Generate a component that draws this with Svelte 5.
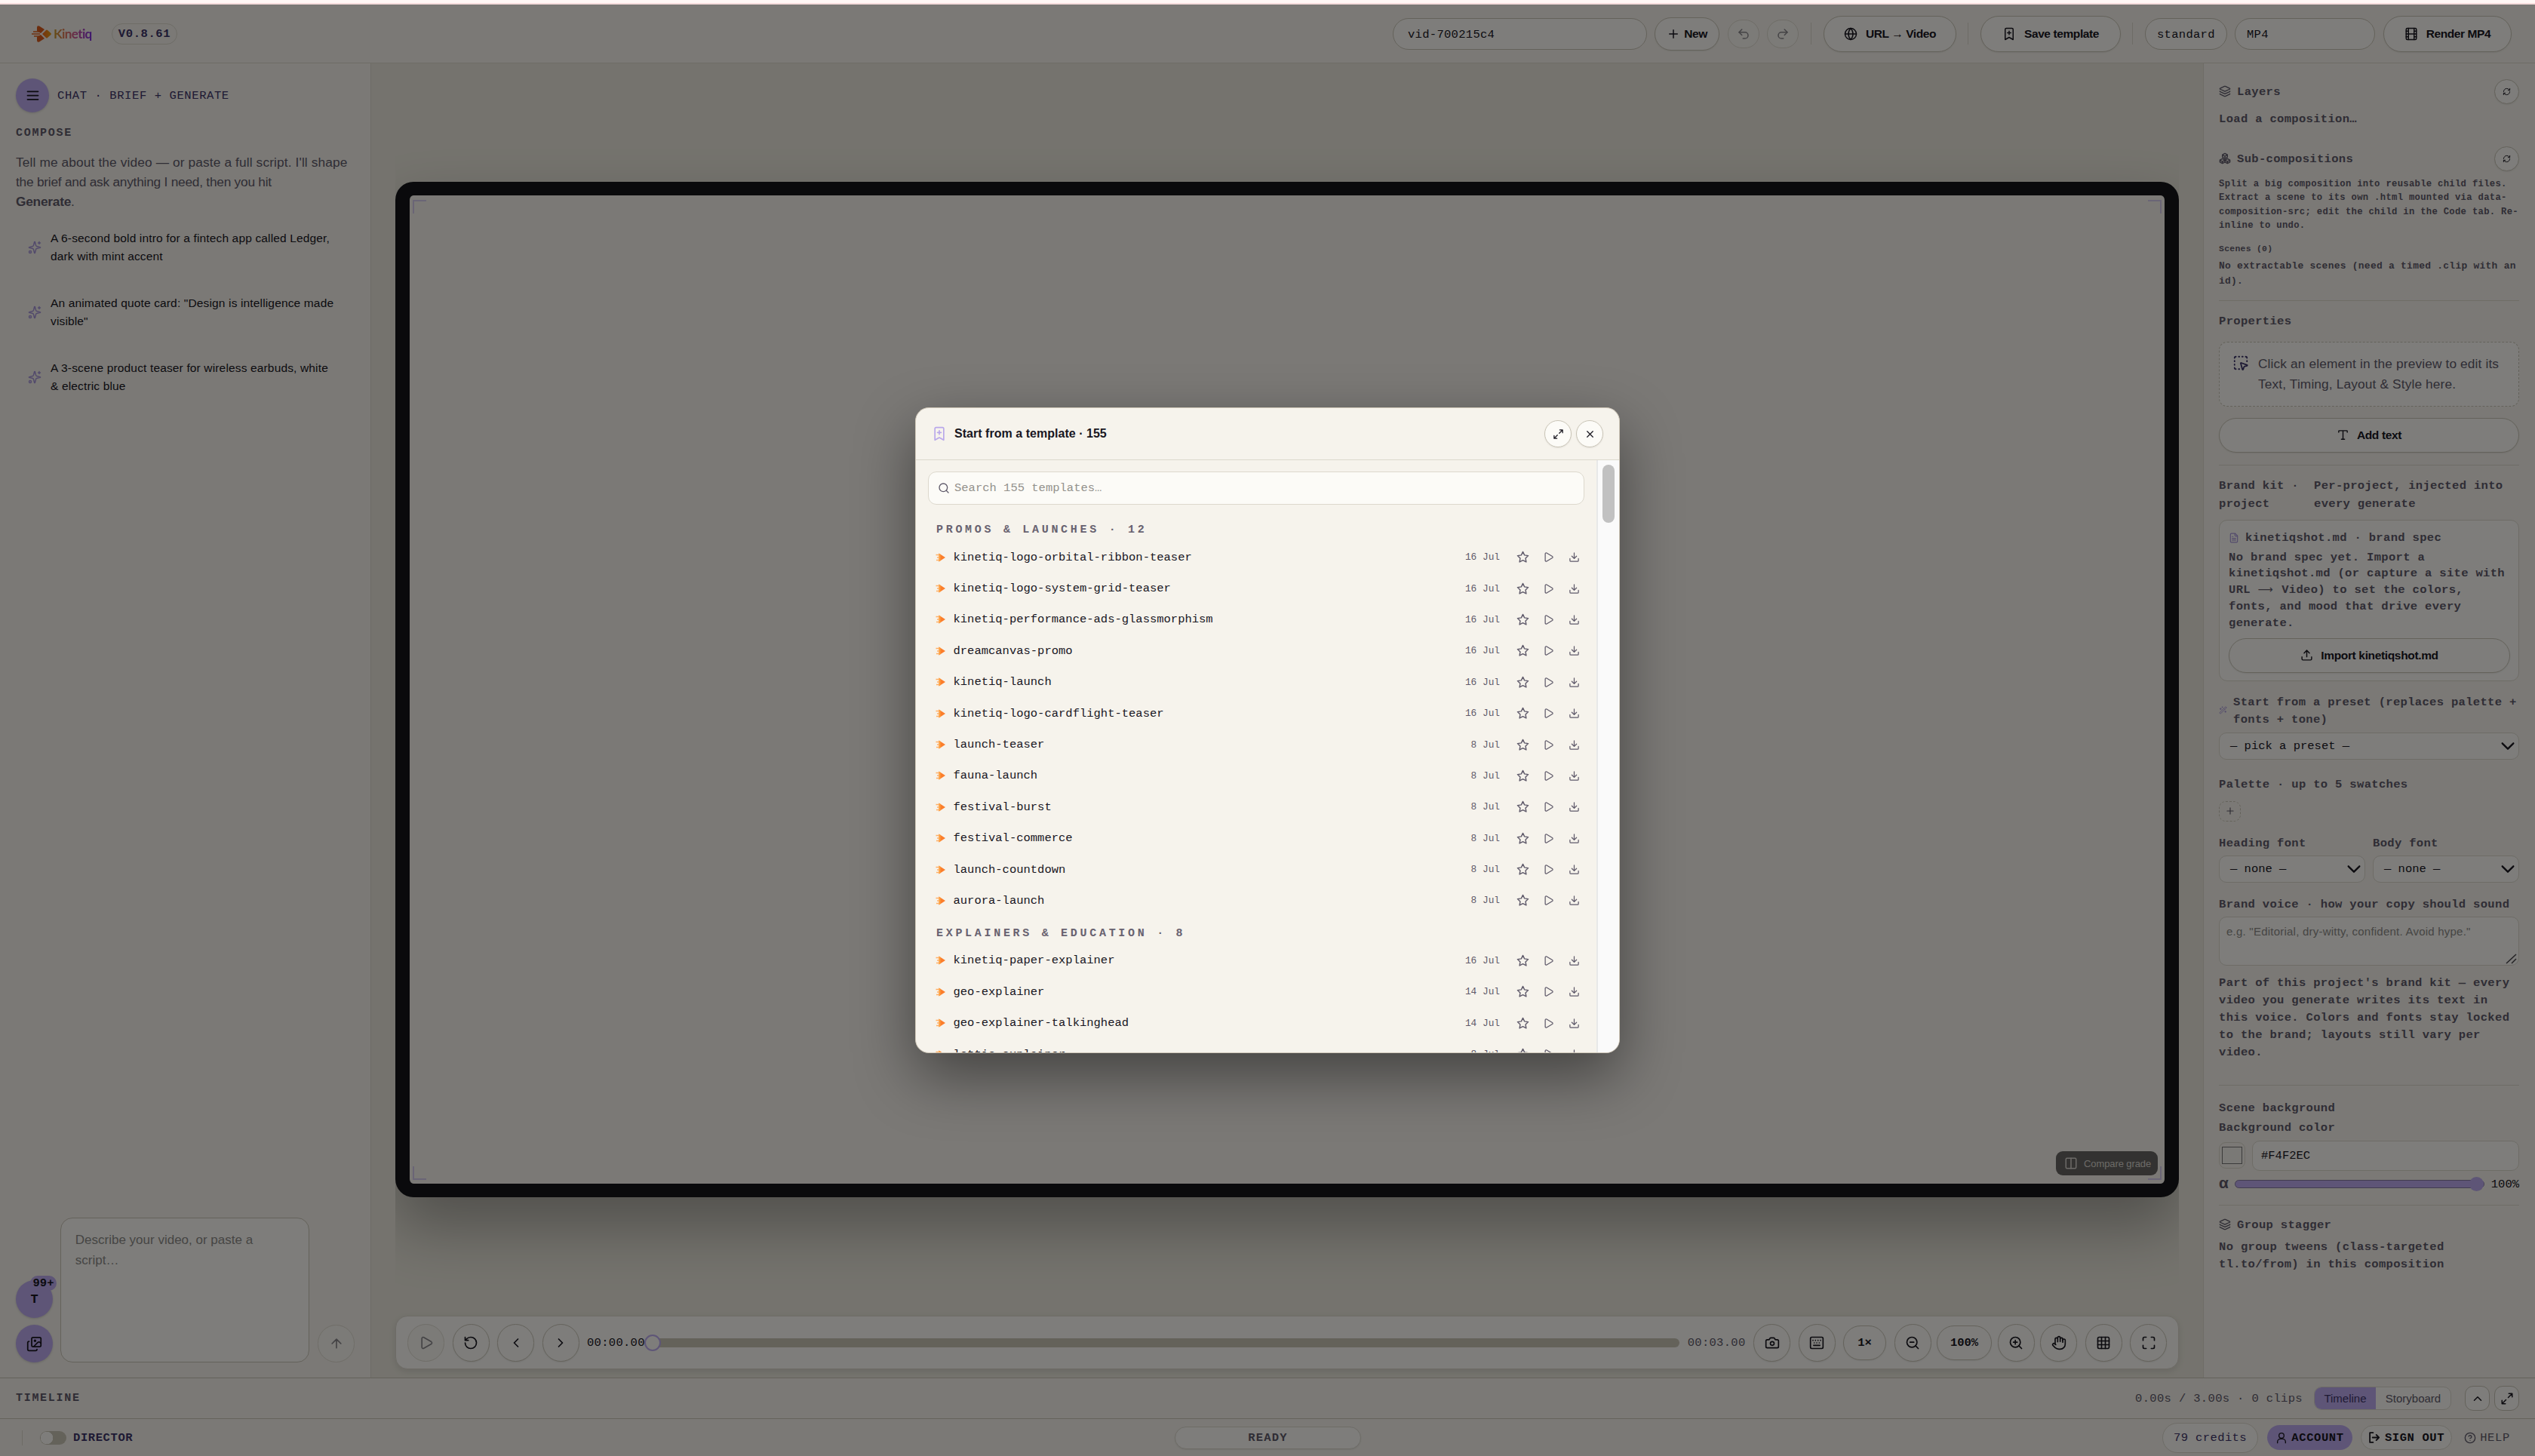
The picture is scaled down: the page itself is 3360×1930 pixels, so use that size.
<script lang="ts">
  const icons: Record<string, string> = {
    menu: '<path d="M4 6h16M4 12h16M4 18h16"/>',
    sparkles: '<path d="M9.9 15.5A2 2 0 0 0 8.500 14.100l-6.100-1.600a.5.5 0 0 1 0-1L8.500 9.900A2 2 0 0 0 9.900 8.500l1.600-6.100a.5.5 0 0 1 1 0L14.100 8.500A2 2 0 0 0 15.500 9.900l6.100 1.600a.5.5 0 0 1 0 1L15.500 14.100a2 2 0 0 0-1.400 1.400l-1.600 6.100a.5.5 0 0 1-1 0z"/><path d="M20 2v4M22 4h-4"/><circle cx="4" cy="20" r="2"/>',
    plus: '<path d="M5 12h14M12 5v14"/>',
    undo: '<path d="M9 14 4 9l5-5"/><path d="M4 9h10.500a5.500 5.500 0 0 1 0 11H11"/>',
    redo: '<path d="m15 14 5-5-5-5"/><path d="M20 9H9.500a5.500 5.500 0 0 0 0 11H13"/>',
    globe: '<circle cx="12" cy="12" r="10"/><path d="M12 2a14.500 14.500 0 0 0 0 20 14.500 14.500 0 0 0 0-20M2 12h20"/>',
    bookmark: '<path d="M19 22l-7-4-7 4V4a2 2 0 0 1 2-2h10a2 2 0 0 1 2 2zM12 7v6M15 10H9"/>',
    film: '<rect x="3" y="2" width="18" height="20" rx="2"/><path d="M7 2v20M17 2v20M3 7h4M3 12h18M3 17h4M17 7h4M17 17h4"/>',
    layers: '<path d="M12.800 2.200a2 2 0 0 0-1.600 0L2.600 6.100a1 1 0 0 0 0 1.800l8.600 3.900a2 2 0 0 0 1.600 0l8.600-3.900a1 1 0 0 0 0-1.800z"/><path d="M2 12a1 1 0 0 0 .6.900l8.600 3.900a2 2 0 0 0 1.600 0l8.600-3.900A1 1 0 0 0 22 12"/><path d="M2 17a1 1 0 0 0 .6.900l8.600 3.900a2 2 0 0 0 1.600 0l8.600-3.900A1 1 0 0 0 22 17"/>',
    boxes: '<path d="M7 12.500 2 15.300v4L7 22l5-2.700v-4zM17 12.500l-5 2.800v4l5 2.700 5-2.700v-4zM12 2 7 4.800v4.700l5 2.900 5-2.900V4.800zM2 15.500l5 2.800 5-2.800 5 2.800 5-2.800M7 18.300V22M17 18.300V22M7 5l5 2.800L17 5M12 7.800v4.600"/>',
    refresh: '<path d="M3 12a9 9 0 0 1 9-9 9.750 9.750 0 0 1 6.700 2.700L21 8M21 3v5h-5M21 12a9 9 0 0 1-9 9 9.750 9.750 0 0 1-6.700-2.700L3 16M8 16H3v5"/>',
    pointer: '<path d="M12 12.700a.5.5 0 0 1 .7-.7l8.500 3.200a.5.5 0 0 1 0 .9l-3.400 1a2 2 0 0 0-1.400 1.400l-1 3.200a.5.5 0 0 1-.9 0zM5 3a2 2 0 0 0-2 2M19 3a2 2 0 0 1 2 2M5 21a2 2 0 0 1-2-2M9 3h1M9 21h1M14 3h1M3 9v1M21 9v1M3 14v1"/>',
    type: '<path d="M12 4v16M4 7V5a1 1 0 0 1 1-1h14a1 1 0 0 1 1 1v2M9 20h6"/>',
    upload: '<path d="M12 3v12M17 8l-5-5-5 5M21 15v4a2 2 0 0 1-2 2H5a2 2 0 0 1-2-2v-4"/>',
    download: '<path d="M12 3v12M7 10l5 5 5-5M21 15v4a2 2 0 0 1-2 2H5a2 2 0 0 1-2-2v-4"/>',
    file: '<path d="M15 2H6a2 2 0 0 0-2 2v16a2 2 0 0 0 2 2h12a2 2 0 0 0 2-2V7zM14 2v4a2 2 0 0 0 2 2h4M10 9H8M16 13H8M16 17H8"/>',
    wand: '<path d="m21.600 3.600-1.200-1.200a1.200 1.200 0 0 0-1.700 0L2.400 18.600a1.200 1.200 0 0 0 0 1.700l1.200 1.200a1.200 1.200 0 0 0 1.700 0L21.600 5.400a1.200 1.200 0 0 0 0-1.800M14 7l3 3M5 6v4M19 14v4M10 2v2M7 8H3M21 16h-4M11 3H9"/>',
    down: '<path d="m4 8 8 8 8-8"/>',
    up: '<path d="m18 15-6-6-6 6"/>',
    left: '<path d="m15 18-6-6 6-6"/>',
    right: '<path d="m9 18 6-6-6-6"/>',
    arrowUp: '<path d="m5 12 7-7 7 7M12 19V5"/>',
    images: '<path d="m22 11-1.300-1.300a2.400 2.400 0 0 0-3.400 0L11 16M4 8a2 2 0 0 0-2 2v10a2 2 0 0 0 2 2h10a2 2 0 0 0 2-2"/><circle cx="13" cy="7" r="1"/><rect x="8" y="2" width="14" height="14" rx="2"/>',
    restart: '<path d="M3 12a9 9 0 1 0 9-9 9.750 9.750 0 0 0-6.700 2.700L3 8M3 3v5h5"/>',
    play: '<path d="M5 5a2 2 0 0 1 3-1.700l12 7a2 2 0 0 1 0 3.400l-12 7A2 2 0 0 1 5 19z"/>',
    camera: '<path d="M14 4a2 2 0 0 1 1.700 1l.5 1a2 2 0 0 0 1.800 1h2a2 2 0 0 1 2 2v9a2 2 0 0 1-2 2H4a2 2 0 0 1-2-2V9a2 2 0 0 1 2-2h2a2 2 0 0 0 1.800-1l.5-1A2 2 0 0 1 10 4z"/><circle cx="12" cy="13" r="3"/>',
    keyboard: '<rect x="2" y="3" width="20" height="18" rx="2"/><path d="M6 8h.01M10 8h.01M14 8h.01M18 8h.01M8 12h.01M12 12h.01M16 12h.01M7 16h10"/>',
    zoomOut: '<circle cx="11" cy="11" r="8"/><path d="m21 21-4.300-4.300M8 11h6"/>',
    zoomIn: '<circle cx="11" cy="11" r="8"/><path d="m21 21-4.300-4.300M8 11h6M11 8v6"/>',
    hand: '<path d="M18 11V6a2 2 0 0 0-4 0M14 10V4a2 2 0 0 0-4 0v2M10 10.500V6a2 2 0 0 0-4 0v8"/><path d="M18 8a2 2 0 1 1 4 0v6a8 8 0 0 1-8 8h-2c-2.800 0-4.500-.9-6-2.300l-3.600-3.600a2 2 0 0 1 2.800-2.800L7 15"/>',
    grid: '<rect x="3" y="3" width="18" height="18" rx="2"/><path d="M3 9h18M3 15h18M9 3v18M15 3v18"/>',
    full: '<path d="M8 3H5a2 2 0 0 0-2 2v3M21 8V5a2 2 0 0 0-2-2h-3M3 16v3a2 2 0 0 0 2 2h3M16 21h3a2 2 0 0 0 2-2v-3"/>',
    expand: '<path d="M15 3h6v6M21 3l-7 7M3 21l7-7M9 21H3v-6"/>',
    user: '<circle cx="12" cy="7.500" r="5"/><path d="M4 22v-2a6 6 0 0 1 6-6h4a6 6 0 0 1 6 6v2"/>',
    logout: '<path d="M9 21H3V3h6M15 17l5-5-5-5M20 12H8"/>',
    help: '<circle cx="12" cy="12" r="10"/><path d="M9.100 9a3 3 0 0 1 5.800 1c0 2-3 3-3 3M12 17h.01"/>',
    columns: '<rect x="3" y="3" width="18" height="18" rx="2"/><path d="M12 3v18"/>',
    search: '<circle cx="11" cy="11" r="8"/><path d="m21 21-4.300-4.300"/>',
    close: '<path d="M18 6 6 18M6 6l12 12"/>',
    star: '<path d="m12 2 3 6.300 7 1-5 4.900 1.200 6.900L12 17.800l-6.200 3.300L7 14.200 2 9.300l7-1z"/>'
  };

  const ideas = [
    'A 6-second bold intro for a fintech app called Ledger,\ndark with mint accent',
    'An animated quote card: "Design is intelligence made\nvisible"',
    'A 3-scene product teaser for wireless earbuds, white\n& electric blue'
  ];

  const groups = [
    {
      title: 'Promos & launches',
      count: 12,
      items: [
        ['kinetiq-logo-orbital-ribbon-teaser', '16 Jul'],
        ['kinetiq-logo-system-grid-teaser', '16 Jul'],
        ['kinetiq-performance-ads-glassmorphism', '16 Jul'],
        ['dreamcanvas-promo', '16 Jul'],
        ['kinetiq-launch', '16 Jul'],
        ['kinetiq-logo-cardflight-teaser', '16 Jul'],
        ['launch-teaser', '8 Jul'],
        ['fauna-launch', '8 Jul'],
        ['festival-burst', '8 Jul'],
        ['festival-commerce', '8 Jul'],
        ['launch-countdown', '8 Jul'],
        ['aurora-launch', '8 Jul']
      ]
    },
    {
      title: 'Explainers & education',
      count: 8,
      items: [
        ['kinetiq-paper-explainer', '16 Jul'],
        ['geo-explainer', '14 Jul'],
        ['geo-explainer-talkinghead', '14 Jul'],
        ['lottie-explainer', '8 Jul']
      ]
    }
  ];
</script>

{#snippet icon(name: string, size = 18, stroke = 2)}
  <svg
    class="icon"
    width={size}
    height={size}
    viewBox="0 0 24 24"
    fill="none"
    stroke="currentColor"
    stroke-width={stroke}
    stroke-linecap="round"
    stroke-linejoin="round">{@html icons[name]}</svg>
{/snippet}

<div class="app">
  <div class="notice"></div>

  <header class="topbar">
    <div class="brand">
      <svg class="logo" width="28" height="24" viewBox="0 0 28 24">
        <defs>
          <linearGradient id="flame" x1="0" y1="0" x2="1" y2="0">
            <stop offset="0" stop-color="#f0641e" />
            <stop offset="1" stop-color="#e8a010" />
          </linearGradient>
        </defs>
        <path d="M8 3.500q0-3 3-2l7 4.500-5 5-5-3zM8 20.500q0 3 3 2l7-4.500-5-5-5 3z" fill="#d85a1c" />
        <path d="M15 12l5-5q1-1 2 0l4.500 4q1 1 0 2L22 17q-1 1-2 0z" fill="url(#flame)" />
        <path d="M3 9h8M1 12h11M4 15h7" stroke="#e0601a" stroke-width="1.500" fill="none" />
      </svg>
      <span class="wordmark">Kinetiq</span>
    </div>
    <span class="version">V0.8.61</span>
    <div class="actions">
      <div class="field project">vid-700215c4</div>
      <button class="pill new">{@render icon('plus', 18)}New</button>
      <button class="pill round faded undo">{@render icon('undo', 18)}</button>
      <button class="pill round faded redo">{@render icon('redo', 18)}</button>
      <i class="sep"></i>
      <button class="pill big url">{@render icon('globe', 18)}<span>URL → Video</span></button>
      <i class="sep"></i>
      <button class="pill big save">{@render icon('bookmark', 18)}<span>Save template</span></button>
      <i class="sep"></i>
      <div class="field quality">standard</div>
      <div class="field format">MP4</div>
      <button class="pill big render">{@render icon('film', 18)}<span>Render MP4</span></button>
    </div>
  </header>

  <main class="workspace">
    <aside class="chat">
      <div class="chat-head">
        <button class="blob menu">{@render icon('menu', 21)}</button>
        <span>CHAT · BRIEF + GENERATE</span>
      </div>
      <h2>COMPOSE</h2>
      <p class="intro">
        <span>Tell me about the video — or paste a full script. I'll shape</span><br />the brief and ask anything I need, then you hit<br /><b>Generate</b>.
      </p>
      {#each ideas as idea}
        <div class="idea">
          {@render icon('sparkles', 18)}
          <span>{idea}</span>
        </div>
      {/each}
      <div class="composer">
        <div class="tools">
          <button class="blob">T<span class="badge">99+</span></button>
          <button class="blob">{@render icon('images', 21)}</button>
        </div>
        <div class="prompt">Describe your video, or paste a script…</div>
        <button class="pill circle faded">{@render icon('arrowUp', 20)}</button>
      </div>
    </aside>

    <section class="center">
      <div class="stage">
        <div class="frame">
          <i class="corner tl"></i><i class="corner tr"></i>
          <i class="corner bl"></i><i class="corner br"></i>
          <button class="compare">{@render icon('columns', 18)}Compare grade</button>
        </div>
      </div>
      <div class="player">
        <button class="pill circle faded">{@render icon('play', 20)}</button>
        <button class="pill circle">{@render icon('restart', 20)}</button>
        <button class="pill circle">{@render icon('left', 20)}</button>
        <button class="pill circle">{@render icon('right', 20)}</button>
        <span class="time">00:00.00</span>
        <div class="seek"><i class="knob"></i></div>
        <span class="time total">00:03.00</span>
        <button class="pill circle">{@render icon('camera', 20)}</button>
        <button class="pill circle">{@render icon('keyboard', 20)}</button>
        <button class="pill mono speed">1×</button>
        <div class="zoom">
          <button class="pill circle">{@render icon('zoomOut', 20)}</button>
          <button class="pill mono level">100%</button>
          <button class="pill circle">{@render icon('zoomIn', 20)}</button>
          <button class="pill circle">{@render icon('hand', 20)}</button>
        </div>
        <button class="pill circle">{@render icon('grid', 20)}</button>
        <button class="pill circle">{@render icon('full', 20)}</button>
      </div>
    </section>

    <aside class="inspector">
      <div class="head">
        {@render icon('layers', 16)}<span>Layers</span>
        <button class="pill mini">{@render icon('refresh', 11)}</button>
      </div>
      <p class="load">Load a composition…</p>
      <div class="head sub">
        {@render icon('boxes', 16)}<span>Sub-compositions</span>
        <button class="pill mini">{@render icon('refresh', 11)}</button>
      </div>
      <p class="split">Split a big composition into reusable child files. Extract a scene to its own .html mounted via data-composition-src; edit the child in the Code tab. Re-inline to undo.</p>
      <p class="scenes">Scenes (0)</p>
      <p class="none">No extractable scenes (need a timed .clip with an id).</p>
      <hr />
      <p class="properties">Properties</p>
      <div class="hint">
        {@render icon('pointer', 22)}
        <span>Click an element in the preview to edit its<br />Text, Timing, Layout &amp; Style here.</span>
      </div>
      <button class="pill wide add">{@render icon('type', 17)}Add text</button>
      <hr class="after-add" />
      <div class="kit">
        <span>Brand kit ·<br />project</span>
        <span>Per-project, injected into every generate</span>
      </div>
      <div class="spec">
        <div class="spec-title">{@render icon('file', 14)}kinetiqshot.md · brand spec</div>
        <p>No brand spec yet. Import a kinetiqshot.md (or capture a site with URL <span class="arrow">⟶</span> Video) to set the colors, fonts, and mood that drive every generate.</p>
        <button class="pill wide">{@render icon('upload', 17)}Import kinetiqshot.md</button>
      </div>
      <div class="preset">
        {@render icon('wand', 11)}
        <span>Start from a preset (replaces palette + fonts + tone)</span>
      </div>
      <div class="select">— pick a preset —{@render icon('down', 22, 2.5)}</div>
      <p class="palette">Palette · up to 5 swatches</p>
      <button class="swatch-add">{@render icon('plus', 14)}</button>
      <div class="fonts">
        <div><p>Heading font</p><div class="select">— none —{@render icon('down', 22, 2.5)}</div></div>
        <div><p>Body font</p><div class="select">— none —{@render icon('down', 22, 2.5)}</div></div>
      </div>
      <p class="voice">Brand voice · how your copy should sound</p>
      <div class="area">
        e.g. "Editorial, dry-witty, confident. Avoid hype."
        <svg class="grip" width="16" height="15" viewBox="0 0 16 15"><path d="M1 14 14 2M8 14l6-6" stroke="currentColor" stroke-width="1.500" /></svg>
      </div>
      <p class="part">Part of this project's brand kit — every video you generate writes its text in this voice. Colors and fonts stay locked to the brand; layouts still vary per video.</p>
      <hr class="after-part" />
      <p class="scene-bg">Scene background</p>
      <p class="bg-label">Background color</p>
      <div class="color-row">
        <div class="swatch"><i></i></div>
        <div class="hex">#F4F2EC</div>
      </div>
      <div class="alpha">
        <b>α</b>
        <div class="range"><i></i></div>
        <span>100%</span>
      </div>
      <hr class="after-alpha" />
      <div class="head group">{@render icon('layers', 16)}<span>Group stagger</span></div>
      <p class="tweens">No group tweens (class-targeted tl.to/from) in this composition</p>
    </aside>
  </main>

  <section class="timeline">
    <h2>TIMELINE</h2>
    <span class="stats">0.00s / 3.00s · 0 clips</span>
    <div class="tabs"><span class="on">Timeline</span><span>Storyboard</span></div>
    <button class="square">{@render icon('up', 18)}</button>
    <button class="square">{@render icon('expand', 18)}</button>
  </section>

  <footer class="status">
    <div class="director"><i class="switch"></i>DIRECTOR</div>
    <div class="ready">READY</div>
    <div class="links">
      <span class="credits">79 credits</span>
      <span class="account">{@render icon('user', 16)}ACCOUNT</span>
      <span class="signout">{@render icon('logout', 17, 2.5)}SIGN OUT</span>
      <span class="help">{@render icon('help', 16)}HELP</span>
    </div>
  </footer>

  <div class="backdrop">
    <div class="modal">
      <div class="modal-head">
        {@render icon('bookmark', 20)}
        <h1>Start from a template · 155</h1>
        <button class="pill tool">{@render icon('expand', 15)}</button>
        <button class="pill tool">{@render icon('close', 15)}</button>
      </div>
      <div class="modal-body">
        <div class="list">
          <div class="search">{@render icon('search', 16)}<span>Search 155 templates…</span></div>
          {#each groups as group}
            <h3>{group.title} · {group.count}</h3>
            {#each group.items as [name, date]}
              <div class="row">
                <svg class="mark" width="14" height="14" viewBox="0 0 14 14">
                  <path d="M4.500 1.500v11l8.500-5.500z" fill="#fb7e2c" />
                  <path d="M4.500 1.500v11l2-1.300V2.800z" fill="#ffa23d" />
                  <path d="M.5 3.500h4M2 7h2.500M1 10.500h3.500" stroke="#ffb066" stroke-width="1.300" />
                </svg>
                <span class="name">{name}</span>
                <span class="date">{date}</span>
                {@render icon('star', 17, 2)}
                {@render icon('play', 15, 2)}
                {@render icon('download', 15, 2)}
              </div>
            {/each}
          {/each}
        </div>
        <div class="scrollbar"><i></i></div>
      </div>
    </div>
  </div>
</div>

<style>
  :global(body) {
    background: #f6f3ec;
    overflow: hidden;
  }

  .app {
    --line: #dcd8cd;
    --edge: #c9c4b6;
    --card: #fcfbf7;
    --ink: #18161f;
    --muted: #5f5a6a;
    --lilac: #bdabee;
    --navy: #3c3468;
    --sans: "Liberation Sans", Arial, sans-serif;
    --mono: "Liberation Mono", "Courier New", monospace;
    position: relative;
    display: flex;
    flex-direction: column;
    height: 1930px;
    background: #f6f3ec;
    color: var(--ink);
    font-family: var(--mono);
    font-size: 15.5px;
  }

  .app * {
    box-sizing: border-box;
  }

  p, h1, h2, h3, hr {
    margin: 0;
  }

  button {
    font: inherit;
    color: inherit;
    padding: 0;
  }

  .icon {
    flex: none;
    display: block;
  }

  .notice {
    height: 6px;
    flex: none;
    background: #fff7f5;
    border-bottom: 2px solid #f6dcdc;
  }

  .pill {
    display: flex;
    align-items: center;
    justify-content: center;
    flex: none;
    background: var(--card);
    border: 1px solid var(--edge);
    border-radius: 25px;
    box-shadow: 0 1px 2px rgba(0, 0, 0, 0.07);
    font-family: var(--sans);
    font-weight: 700;
    letter-spacing: -0.4px;
  }

  .faded {
    color: #88868a;
    background: #f9f7f1;
    border-color: #dedacf;
    box-shadow: none;
  }

  .circle {
    width: 49px;
    height: 50px;
  }

  .mono {
    font-family: var(--mono);
    height: 46px;
    letter-spacing: 0;
  }

  /* top bar */
  .topbar {
    display: flex;
    align-items: center;
    height: 78px;
    flex: none;
    padding: 0 31px 0 41px;
    border-bottom: 1px solid var(--line);
  }

  .brand {
    display: flex;
    align-items: center;
    gap: 2px;
    width: 107px;
  }

  .wordmark {
    font-family: Lato, var(--sans);
    font-weight: 700;
    font-size: 17px;
    letter-spacing: -0.6px;
    background: linear-gradient(90deg, #c89a28, #e07858 30%, #c84c9c 60%, #7a2ee0);
    background-clip: text;
    color: transparent;
  }

  .version {
    display: flex;
    align-items: center;
    justify-content: center;
    width: 87px;
    height: 28px;
    border: 1px solid var(--line);
    border-radius: 14px;
    color: var(--navy);
    font-weight: 700;
    letter-spacing: 0.6px;
  }

  .actions {
    display: flex;
    align-items: center;
    margin-left: auto;
  }

  .field {
    height: 42px;
    padding: 1px 0 0 19px;
    line-height: 40px;
    border: 1px solid var(--edge);
    border-radius: 21px;
    background: var(--card);
    letter-spacing: 0.3px;
  }

  .project { width: 337px; margin-right: 10px; }
  .quality { width: 109px; padding-left: 15px; margin-right: 10px; }
  .format { width: 186px; padding-left: 15px; margin-right: 11px; }
  .new { width: 86px; height: 44px; gap: 5px; margin-right: 11px; }
  .round { width: 42px; height: 38px; }
  .undo { margin-right: 10px; }
  .redo { margin-right: 16px; }
  .big { height: 48px; gap: 11px; }
  .url { width: 176px; }
  .save { width: 186px; }
  .render { width: 170px; }

  .sep {
    width: 1px;
    height: 29px;
    background: var(--line);
  }

  .redo + .sep { margin-right: 16px; }
  .url + .sep, .save + .sep { margin: 0 16px 0 15px; }

  /* workspace */
  .workspace {
    display: flex;
    height: 1742px;
    flex: none;
  }

  .chat {
    display: flex;
    flex-direction: column;
    width: 492px;
    padding: 20px 21px 20px;
    border-right: 1px solid var(--line);
  }

  .chat-head {
    display: flex;
    align-items: center;
    gap: 11px;
    color: var(--navy);
    letter-spacing: 0.6px;
  }

  .blob {
    position: relative;
    display: flex;
    align-items: center;
    justify-content: center;
    width: 49px;
    height: 50px;
    border: 0;
    border-radius: 50%;
    background: var(--lilac);
    color: var(--ink);
    font-size: 17px;
    font-weight: 700;
    box-shadow: 0 1px 3px rgba(0, 0, 0, 0.15);
  }

  .blob.menu {
    width: 44px;
    height: 45px;
  }

  .badge {
    position: absolute;
    left: 19px;
    top: -6px;
    width: 35px;
    height: 20px;
    font-size: 15.500px;
    line-height: 20px;
    border-radius: 10px;
    background: var(--lilac);
  }

  h2 {
    color: var(--muted);
    font-size: 15px;
    letter-spacing: 1.700px;
  }

  .chat h2 {
    margin-top: 16px;
    line-height: 24px;
  }

  .intro {
    margin: 13px 0 5px;
    font-family: var(--sans);
    font-size: 17.300px;
    line-height: 26px;
    letter-spacing: -0.230px;
    color: var(--muted);
    white-space: nowrap;
  }

  .intro span {
    letter-spacing: 0.130px;
  }

  .idea {
    display: flex;
    align-items: center;
    gap: 12px;
    height: 86px;
    padding-left: 16px;
    font-family: var(--sans);
    line-height: 24.500px;
    letter-spacing: 0.150px;
    white-space: pre-line;
  }

  .idea :global(svg) {
    color: #a695d8;
  }

  .composer {
    display: flex;
    align-items: flex-end;
    margin-top: auto;
  }

  .tools {
    display: flex;
    flex-direction: column;
    gap: 9px;
    width: 59px;
  }

  .prompt {
    width: 331px;
    height: 192px;
    margin-right: 11px;
    padding: 15px 60px 0 19px;
    border: 1px solid var(--edge);
    border-radius: 16px;
    background: var(--card);
    font-family: var(--sans);
    font-size: 17px;
    line-height: 27px;
    letter-spacing: 0;
    color: #8d8b88;
  }

  .center {
    display: flex;
    flex-direction: column;
    flex: 1;
    padding: 0 32px 11px;
    background: #eae7dc;
  }

  .stage {
    flex: 1;
    padding-top: 157px;
    overflow: hidden;
  }

  .frame {
    position: relative;
    height: 1346px;
    border: 18px solid #141418;
    border-width: 18px 19px;
    border-radius: 24px;
    background: #f6f3ec;
    box-shadow: 0 40px 80px rgba(0, 0, 0, 0.3);
  }

  .corner {
    position: absolute;
    width: 18px;
    height: 18px;
    border: 0 solid #d5cbec;
  }

  .tl { left: 4px; top: 6px; border-width: 2px 0 0 2px; }
  .tr { right: 4px; top: 6px; border-width: 2px 2px 0 0; }
  .bl { left: 4px; bottom: 5px; border-width: 0 0 2px 2px; }
  .br { right: 4px; bottom: 5px; border-width: 0 2px 2px 0; }

  .compare {
    position: absolute;
    right: 9px;
    bottom: 11px;
    display: flex;
    align-items: center;
    gap: 8px;
    width: 135px;
    height: 32px;
    padding-left: 11px;
    border: 0;
    border-radius: 9px;
    background: #676562;
    color: #d8d5cf;
    font-family: var(--sans);
    font-size: 13px;
    letter-spacing: -0.100px;
    white-space: nowrap;
  }

  .player {
    display: flex;
    align-items: center;
    gap: 10.500px;
    height: 71px;
    padding: 0 15px;
    border: 1px solid var(--line);
    border-radius: 16px;
    background: var(--card);
    box-shadow: 0 3px 8px rgba(0, 0, 0, 0.1);
  }

  .time {
    letter-spacing: 0.3px;
  }

  .total {
    color: var(--muted);
  }

  .seek {
    position: relative;
    flex: 1;
    height: 12px;
    border-radius: 6px;
    background: #c9c4b4;
  }

  .knob {
    position: absolute;
    left: -11px;
    top: -5px;
    width: 22px;
    height: 22px;
    border: 2px solid var(--lilac);
    border-radius: 50%;
    background: var(--card);
  }

  .speed { width: 57px; }
  .level { width: 73px; }

  .zoom {
    display: flex;
    align-items: center;
    gap: 7.500px;
  }

  /* inspector */
  .inspector {
    width: 440px;
    padding: 20px 21px 0 20px;
    border-left: 1px solid var(--line);
    color: var(--muted);
    font-weight: 700;
    line-height: 24px;
    letter-spacing: 0.330px;
  }

  .head {
    display: flex;
    align-items: center;
    gap: 8px;
    height: 34px;
  }

  .head span {
    padding-top: 2px;
  }

  .mini {
    width: 33px;
    height: 33px;
    margin-left: auto;
    color: var(--ink);
  }

  .load { margin-top: 8px; }
  .sub { margin-top: 23px; }

  .split {
    margin-top: 8px;
    font-size: 12.200px;
    line-height: 18.400px;
    letter-spacing: 0.320px;
  }

  .scenes {
    margin-top: 12px;
    font-size: 11.400px;
    line-height: 18px;
    letter-spacing: 0.300px;
  }

  .none {
    margin-top: 4px;
    font-size: 12.900px;
    line-height: 20px;
    letter-spacing: 0.300px;
  }

  hr {
    height: 1px;
    border: 0;
    margin: 15px 0;
    background: var(--line);
  }

  .hint {
    display: flex;
    gap: 12px;
    height: 86px;
    margin: 15px 0;
    padding: 15px 0 0 17px;
    border: 1px dashed var(--edge);
    border-radius: 11px;
    background: var(--card);
    font-family: var(--sans);
    font-weight: 400;
    font-size: 17.300px;
    line-height: 27px;
    letter-spacing: 0.140px;
    white-space: nowrap;
  }

  .hint :global(svg) {
    margin-top: 1px;
    color: var(--navy);
  }

  .wide {
    width: 100%;
    height: 46px;
    gap: 10px;
    color: var(--ink);
    letter-spacing: -0.350px;
  }

  .after-add { margin: 16px 0 15px; }

  .kit {
    display: grid;
    grid-template-columns: 126px 1fr;
  }

  .spec {
    height: 214px;
    margin: 9px 0 16px;
    padding: 11px 11px 0 12px;
    border: 1px solid var(--line);
    border-radius: 11px;
    background: var(--card);
  }

  .spec-title {
    display: flex;
    align-items: center;
    gap: 8px;
  }

  .spec-title :global(svg), .preset :global(svg) {
    color: #a695d8;
  }

  .spec p {
    margin: 4px 0 8px;
    line-height: 21.800px;
  }

  .arrow {
    display: inline-block;
    width: 22px;
    font-family: "DejaVu Sans", sans-serif;
    font-size: 14px;
    font-weight: 400;
    line-height: 17px;
    letter-spacing: 0;
  }

  .preset {
    display: flex;
    align-items: center;
    gap: 8px;
    line-height: 23px;
  }

  .preset span {
    padding-top: 1px;
    margin-bottom: -1px;
  }

  .select {
    display: flex;
    align-items: center;
    justify-content: space-between;
    height: 36px;
    margin-top: 6px;
    padding: 0 3px 0 14px;
    border: 1px solid var(--line);
    border-radius: 10px;
    background: var(--card);
    color: var(--ink);
    font-weight: 400;
    letter-spacing: 0;
  }

  .palette { margin: 21px 0 10px; }

  .swatch-add {
    display: flex;
    align-items: center;
    justify-content: center;
    width: 29px;
    height: 27px;
    border: 1px dashed var(--edge);
    border-radius: 9px;
    background: none;
  }

  .fonts {
    display: grid;
    grid-template-columns: 1fr 1fr;
    gap: 10px;
    margin: 17px 0;
  }

  .fonts .select { margin-top: 4px; }

  .area {
    position: relative;
    height: 65px;
    margin: 4px 0 12px;
    padding: 7px 9px;
    border: 1px solid var(--line);
    border-radius: 10px;
    background: var(--card);
    color: #8d8b88;
    font-family: var(--sans);
    font-weight: 400;
    font-size: 15px;
    letter-spacing: 0.230px;
  }

  .grip {
    position: absolute;
    right: 1px;
    bottom: 1px;
    color: #4a484c;
  }

  .part { line-height: 23.200px; }
  .after-part { margin: 30px 0 18px; }
  .bg-label { margin-top: 2px; }

  .color-row {
    display: flex;
    align-items: center;
    gap: 9px;
    margin: 5px 0 8px;
  }

  .swatch {
    width: 35px;
    height: 35px;
    padding: 5px 3px;
    border: 1px solid var(--line);
    border-radius: 9px;
  }

  .swatch i {
    display: block;
    height: 23px;
    border: 1px solid #767676;
    background: #f4f2ec;
  }

  .hex {
    flex: 1;
    height: 40px;
    padding-left: 11px;
    border: 1px solid var(--line);
    border-radius: 10px;
    background: var(--card);
    color: var(--ink);
    font-weight: 400;
    line-height: 38px;
    letter-spacing: 0;
  }

  .alpha {
    display: flex;
    align-items: center;
    height: 20px;
    color: var(--ink);
    font-weight: 400;
    letter-spacing: 0;
  }

  .alpha b {
    width: 21px;
    font-size: 21px;
    color: var(--muted);
  }

  .range {
    flex: 1;
    display: flex;
    align-items: center;
    justify-content: flex-end;
    height: 11px;
    margin-right: 9px;
    border: 1px solid #84799f;
    border-radius: 6px;
    background: var(--lilac);
  }

  .range i {
    width: 19px;
    height: 19px;
    flex: none;
    border-radius: 50%;
    background: var(--lilac);
  }

  .after-alpha { margin: 17px 0 8px; }
  .tweens { margin-top: 2px; line-height: 23.200px; }

  /* timeline + status */
  .timeline {
    display: flex;
    align-items: center;
    height: 55px;
    flex: none;
    padding: 0 21px;
    border-top: 1px solid var(--edge);
    border-bottom: 1px solid var(--edge);
  }

  .timeline h2 {
    flex: 1;
  }

  .stats {
    margin-right: 15px;
    color: var(--muted);
    letter-spacing: 0.350px;
  }

  .tabs {
    display: flex;
    width: 182px;
    height: 31px;
    margin-right: 18px;
    border: 1px solid var(--line);
    border-radius: 10px;
    background: var(--card);
    overflow: hidden;
    font-family: var(--sans);
    font-size: 15px;
    line-height: 29px;
    letter-spacing: 0;
    color: var(--muted);
    text-align: center;
  }

  .tabs span { flex: 1; }

  .tabs .on {
    flex: 0 0 81px;
    background: var(--lilac);
    color: var(--navy);
  }

  .square {
    display: grid;
    place-items: center;
    width: 33px;
    height: 33px;
    border: 1px solid var(--edge);
    border-radius: 11px;
    background: var(--card);
  }

  .square + .square { margin-left: 6px; }

  .status {
    display: grid;
    grid-template-columns: 1fr 247px 1fr;
    align-items: center;
    flex: 1;
    padding: 0 20px 0 29px;
  }

  .director {
    display: flex;
    align-items: center;
    gap: 9px;
    padding-left: 23px;
    border-left: 1px solid var(--line);
    color: var(--navy);
    font-weight: 700;
    line-height: 20px;
    letter-spacing: 0.600px;
  }

  .switch {
    width: 35px;
    height: 18px;
    border-radius: 9px;
    background: radial-gradient(circle at 9px 9px, #fcfbf7 8px, #c9c4b4 8.500px);
  }

  .ready {
    height: 30px;
    margin: 0 4px 0 -4px;
    border: 1px solid var(--line);
    border-radius: 15px;
    background: var(--card);
    color: var(--muted);
    font-weight: 700;
    line-height: 28px;
    letter-spacing: 1.200px;
    text-align: center;
    box-shadow: 0 1px 2px rgba(0, 0, 0, 0.07);
  }

  .links {
    display: flex;
    align-items: center;
    justify-content: flex-end;
    font-weight: 700;
    letter-spacing: 0.600px;
  }

  .links span {
    display: flex;
    align-items: center;
    justify-content: center;
    gap: 5px;
    height: 33px;
    border-radius: 17px;
  }

  .links .credits {
    width: 127px;
    height: 40px;
    border: 1px solid var(--line);
    border-radius: 20px;
    background: var(--card);
    color: var(--navy);
    font-weight: 400;
    letter-spacing: 0.400px;
  }

  .links .account {
    width: 113px;
    margin: 0 11px 0 12px;
    background: var(--lilac);
  }

  .links .signout {
    width: 121px;
    border: 1px solid var(--line);
    background: var(--card);
  }

  .links .help {
    width: 90px;
    padding-left: 3px;
    color: var(--muted);
    font-weight: 400;
  }

  /* template picker */
  .backdrop {
    position: absolute;
    inset: 6px 0 0;
    display: grid;
    place-items: center;
    background: rgba(0, 0, 0, 0.5);
  }

  .modal {
    width: 934px;
    height: 856px;
    display: flex;
    flex-direction: column;
    border: 1px solid #cfc7b8;
    border-radius: 18px;
    background: #f6f3ec;
    box-shadow: 0 30px 80px rgba(0, 0, 0, 0.45);
    overflow: hidden;
  }

  .modal-head {
    display: flex;
    align-items: center;
    height: 69px;
    flex: none;
    padding: 0 21px;
    border-bottom: 1px solid var(--line);
  }

  .modal-head > :global(svg) {
    color: #b9a8ea;
  }

  h1 {
    flex: 1;
    padding-left: 10px;
    font-family: var(--sans);
    font-size: 16px;
    letter-spacing: 0.030px;
  }

  .tool {
    width: 36px;
    height: 36px;
    margin-left: 6px;
  }

  .modal-body {
    display: flex;
    flex: 1;
    min-height: 0;
  }

  .list {
    flex: 1;
    padding: 15px 16px 0;
    overflow: hidden;
  }

  .search {
    display: flex;
    align-items: center;
    gap: 6px;
    height: 44px;
    margin-bottom: 20px;
    padding-left: 12px;
    border: 1px solid var(--line);
    border-radius: 11px;
    background: var(--card);
    color: var(--muted);
  }

  .search span {
    color: #93918c;
  }

  h3 {
    height: 29px;
    padding-left: 11px;
    font-size: 15px;
    line-height: 27px;
    letter-spacing: 3.700px;
    text-transform: uppercase;
    color: #686270;
  }

  .row ~ h3 {
    margin-top: 9px;
  }

  .row {
    display: flex;
    align-items: center;
    height: 41.400px;
    padding: 0 6.500px 0 10px;
    color: var(--muted);
  }

  .name {
    flex: 1;
    padding-left: 9.500px;
    color: var(--ink);
  }

  .date {
    margin-right: 22px;
    font-size: 12.800px;
  }

  .row .date ~ :global(svg + svg) {
    margin-left: 17.500px;
  }

  .row .date ~ :global(svg + svg + svg) {
    margin-left: 19px;
  }

  .scrollbar {
    width: 30px;
    padding: 6px 0 0 6px;
    border-left: 2px solid #e8e8e8;
    background: #fafafa;
  }

  .scrollbar i {
    display: block;
    width: 16px;
    height: 77px;
    border-radius: 8px;
    background: #c1c1c1;
  }
</style>
